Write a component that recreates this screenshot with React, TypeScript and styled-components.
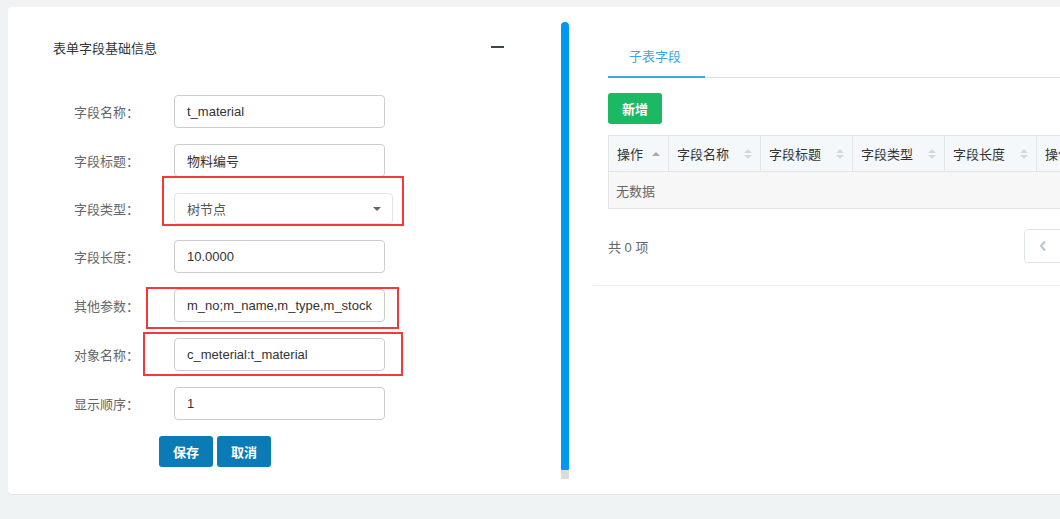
import * as React from "react";
import styled, { createGlobalStyle } from "styled-components";

const GlobalStyle = createGlobalStyle`
  html, body {
    margin: 0;
    padding: 0;
    background: #eff3f4;
    overflow: hidden;
  }
  body {
    font-family: "Liberation Sans", "Noto Sans CJK SC", sans-serif;
    font-size: 13px;
    color: #333;
  }
  * {
    box-sizing: border-box;
  }
`;

const SPage = styled.div`
  width: 1060px;
  height: 519px;
  padding: 7px 0 0 8px;
  overflow: hidden;
`;

const SCard = styled.div`
  position: relative;
  width: 1100px;
  height: 487px;
  background: #fff;
  border-radius: 4px;
  box-shadow: 0 1px 0 #e1e5e7;
  display: flex;
`;

const SLeft = styled.div`
  width: 553px;
  flex: none;
  padding: 27px 0 0 45px;
`;

const STitleRow = styled.div`
  width: 453px;
  height: 26px;
  display: flex;
  align-items: center;
  justify-content: space-between;
  margin-bottom: 35px;
`;

const STitle = styled.div`
  font-size: 13px;
  color: #333;
`;

const SMinus = styled.div`
  width: 13px;
  height: 2px;
  background: #37474f;
  margin-right: 2px;
`;

const SForm = styled.div`
  display: flex;
  flex-direction: column;
  gap: 16px;
`;

const SRow = styled.div`
  display: flex;
  align-items: center;
`;

const SLabel = styled.div`
  width: 121px;
  padding-right: 35px;
  text-align: right;
  color: #666;
  white-space: nowrap;
`;

const SInput = styled.div`
  width: 211px;
  height: 33px;
  border: 1px solid #ccc;
  border-radius: 4px;
  padding: 0 12px;
  display: flex;
  align-items: center;
  color: #333;
  white-space: nowrap;
`;

const SValue = styled.span`
  flex: 1;
  overflow: hidden;
`;

const SSelect = styled(SInput)`
  width: 219px;
  height: 31px;
  border-color: #e1e5e8;
  color: #555;
  padding-right: 11px;
`;

const SCaret = styled.span`
  width: 0;
  height: 0;
  border-left: 4px solid transparent;
  border-right: 4px solid transparent;
  border-top: 4px solid #666;
`;

const SButtons = styled.div`
  display: flex;
  gap: 4px;
  padding-left: 106px;
`;

const SButton = styled.div<{ $color: string }>`
  height: 31px;
  width: 54px;
  border-radius: 3px;
  background: ${({ $color }) => $color};
  color: #fff;
  font-weight: bold;
  display: flex;
  align-items: center;
  justify-content: center;
`;

const SScroll = styled.div`
  width: 8px;
  flex: none;
  margin-top: 15px;
  display: flex;
  flex-direction: column;
  height: 457px;
`;

const SThumb = styled.div`
  flex: 1;
  background: #0098f2;
  border-radius: 4px 4px 1px 1px;
`;

const STrack = styled.div`
  height: 9px;
  background: #dcdcdc;
`;

const SRight = styled.div`
  margin-left: 24px;
  width: 520px;
  height: 278px;
  padding: 32px 0 0 15px;
  box-shadow: 0 1px 0 #eceff1;
`;

const STabs = styled.div`
  display: flex;
  border-bottom: 1px solid #ddd;
  height: 39px;
`;

const STab = styled.div`
  width: 97px;
  padding-left: 21px;
  color: #3ba4e6;
  border-bottom: 2px solid #3aa9e8;
  margin-bottom: -1px;
  display: flex;
  align-items: center;
  padding-bottom: 4px;
`;

const SToolbar = styled.div`
  margin-top: 15px;
  margin-bottom: 11px;
`;

const STable = styled.div`
  border: 1px solid #e1e5e7;
  border-right: none;
`;

const SHead = styled.div`
  display: flex;
  height: 36px;
  background: #f5f8fa;
  border-bottom: 1px solid #e1e5e7;
`;

const SHeadCell = styled.div<{ $w: number }>`
  width: ${({ $w }) => $w}px;
  flex: none;
  border-right: 1px solid #e1e5e7;
  padding: 0 8px;
  display: flex;
  align-items: center;
  justify-content: space-between;
  white-space: nowrap;
  overflow: hidden;
  color: #333;
`;

const SSort = styled.span`
  display: flex;
  flex-direction: column;
  gap: 2px;
`;

const SArrow = styled.span<{ $down?: boolean; $dark?: boolean }>`
  width: 0;
  height: 0;
  border-left: 4px solid transparent;
  border-right: 4px solid transparent;
  ${({ $down, $dark }) =>
    $down
      ? `border-top: 4px solid ${$dark ? "#aaa" : "#d5d9dc"};`
      : `border-bottom: 4px solid ${$dark ? "#aaa" : "#d5d9dc"};`}
`;

const SEmpty = styled.div`
  height: 36px;
  background: #f7f7f7;
  padding-left: 7px;
  display: flex;
  align-items: center;
  color: #666;
`;

const SFooter = styled.div`
  margin-top: 20px;
  display: flex;
  align-items: center;
  justify-content: space-between;
`;

const STotal = styled.div`
  color: #666;
`;

const SPager = styled.div`
  width: 60px;
  height: 34px;
  border: 1px solid #dfe4e7;
  border-radius: 4px;
  display: flex;
  align-items: center;
  padding-left: 14px;
  margin-right: 24px;
`;

const SMark = styled.div<{ $l: number; $t: number; $w: number; $h: number }>`
  position: absolute;
  left: ${({ $l }) => $l}px;
  top: ${({ $t }) => $t}px;
  width: ${({ $w }) => $w}px;
  height: ${({ $h }) => $h}px;
  border: 2.5px solid #f23a3a;
  pointer-events: none;
`;

const fields = [
  { label: "字段名称：", value: "t_material" },
  { label: "字段标题：", value: "物料编号" },
  { label: "字段类型：", value: "树节点", select: true },
  { label: "字段长度：", value: "10.0000" },
  { label: "其他参数：", value: "m_no;m_name,m_type,m_stock,m_unit" },
  { label: "对象名称：", value: "c_meterial:t_material" },
  { label: "显示顺序：", value: "1" },
];

const columns = [
  { title: "操作", w: 60, active: true },
  { title: "字段名称", w: 92 },
  { title: "字段标题", w: 92 },
  { title: "字段类型", w: 92 },
  { title: "字段长度", w: 92 },
  { title: "操作", w: 60, last: true },
];

const App = () => (
  <>
    <GlobalStyle />
    <SPage>
      <SCard>
        <SLeft>
          <STitleRow>
            <STitle>表单字段基础信息</STitle>
            <SMinus />
          </STitleRow>
          <SForm>
            {fields.map((f) => (
              <SRow key={f.label}>
                <SLabel>{f.label}</SLabel>
                {f.select ? (
                  <SSelect>
                    <SValue>{f.value}</SValue>
                    <SCaret />
                  </SSelect>
                ) : (
                  <SInput>
                    <SValue>{f.value}</SValue>
                  </SInput>
                )}
              </SRow>
            ))}
            <SButtons>
              <SButton $color="#0b7bb6">保存</SButton>
              <SButton $color="#0b7bb6">取消</SButton>
            </SButtons>
          </SForm>
        </SLeft>
        <SScroll>
          <SThumb />
          <STrack />
        </SScroll>
        <SRight>
          <STabs>
            <STab>子表字段</STab>
          </STabs>
          <SToolbar>
            <SButton $color="#1bb964">新增</SButton>
          </SToolbar>
          <STable>
            <SHead>
              {columns.map((c, i) => (
                <SHeadCell key={i} $w={c.w}>
                  {c.title}
                  {!c.last &&
                    (c.active ? (
                      <SSort>
                        <SArrow $dark />
                      </SSort>
                    ) : (
                      <SSort>
                        <SArrow />
                        <SArrow $down />
                      </SSort>
                    ))}
                </SHeadCell>
              ))}
            </SHead>
            <SEmpty>无数据</SEmpty>
          </STable>
          <SFooter>
            <STotal>共 0 项</STotal>
            <SPager>
              <svg width="8" height="12" viewBox="0 0 8 12">
                <path d="M6 1.5 L2 6 L6 10.5" fill="none" stroke="#b8c6d0" strokeWidth="2" />
              </svg>
            </SPager>
          </SFooter>
        </SRight>
        <SMark $l={154} $t={169} $w={242} $h={50} />
        <SMark $l={138} $t={280} $w={253} $h={42} />
        <SMark $l={135} $t={325} $w={260} $h={44} />
      </SCard>
    </SPage>
  </>
);

export default App;
